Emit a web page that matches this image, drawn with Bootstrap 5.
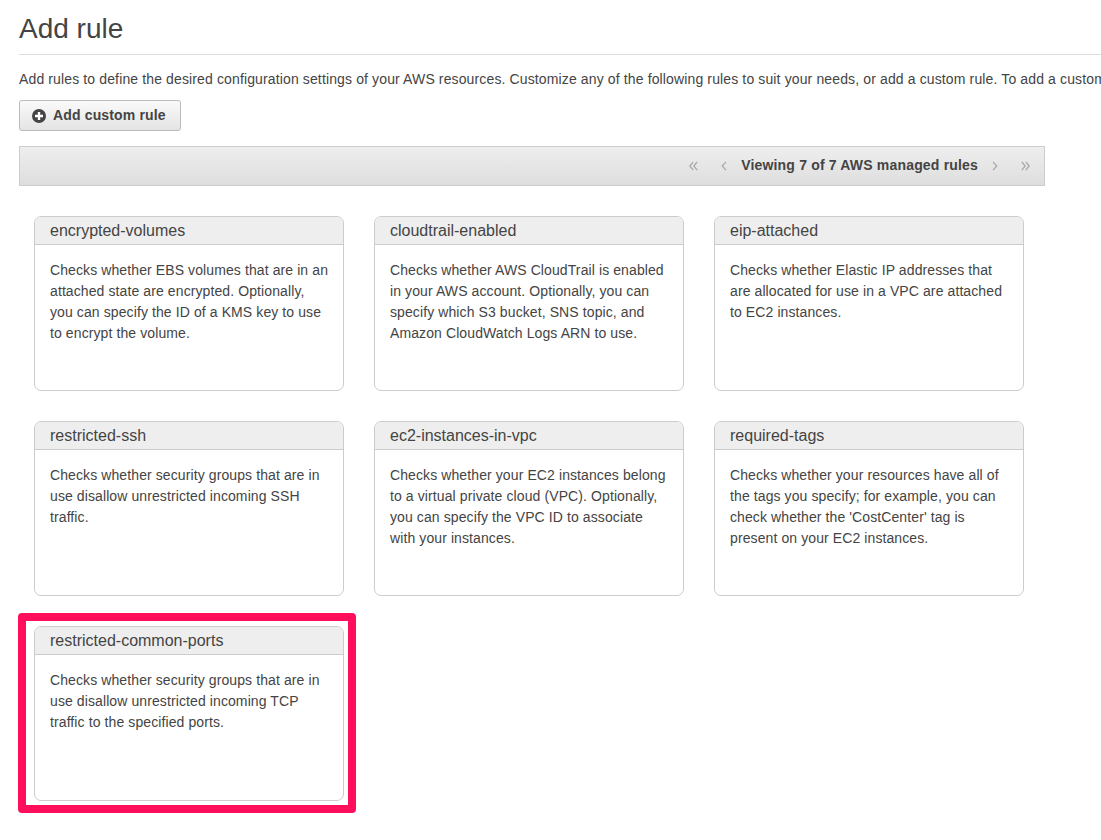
<!DOCTYPE html>
<html lang="en">
<head>
<meta charset="utf-8">
<title>Add rule</title>
<link href="https://cdn.jsdelivr.net/npm/bootstrap@5.3.0/dist/css/bootstrap.min.css" rel="stylesheet">
<style>
html,body{overflow:hidden;height:840px;}
body{font-family:"Liberation Sans",Arial,sans-serif;color:#444;font-size:14px;background:#fff;}
.page-wrap{padding:0 0 0 19px;width:1101px;}
.page-title{font-size:28px;line-height:32px;font-weight:400;margin:0;padding:13px 0 9px;border-bottom:1px solid #ddd;color:#444;height:55px;}
.intro-text{white-space:nowrap;margin:15px 0 0;line-height:18px;height:18px;font-size:14px;color:#444;letter-spacing:.13px;overflow:hidden;width:1082px;}
.add-btn{margin-top:12px;width:162px;height:31px;padding:0 0 0 12px;font-size:14px;font-weight:700;letter-spacing:.15px;color:#444;border:1px solid #bbb;border-radius:3px;background:linear-gradient(#fafafa,#e4e4e4);display:flex;align-items:center;justify-content:flex-start;gap:7px;}
.add-btn:hover{color:#444;border-color:#bbb;}
.pager-bar{margin-top:15px;width:1026px;height:40px;border:1px solid #ccc;background:linear-gradient(#eeeeee,#dedede);padding:0 14px 1px 0;}
.pager-label{font-weight:700;color:#444;letter-spacing:.18px;margin:0 14px;}
.pager-icon{display:block;}
.pager-gap{margin-left:23px;}
.rule-grid{display:grid;grid-template-columns:repeat(3,310px);gap:30px;margin:30px 0 0 15px;}
.rule-card{height:175px;border:1px solid #ccc;border-radius:7px;background:#fff;position:relative;}
.rule-head{height:28px;line-height:27px;font-size:16px;padding:0 15px;background:#eeeeee;border-bottom:1px solid #ccc;border-radius:6px 6px 0 0;color:#444;}
.rule-text{padding:15px 13px 0 15px;line-height:21px;font-size:14px;color:#444;letter-spacing:.1px;}
.rule-mark{position:absolute;left:-17px;right:-13px;top:-14px;bottom:-13px;border:8px solid #ff0f5b;border-radius:4px;pointer-events:none;}
</style>
</head>
<body>
<div class="page-wrap">
  <h1 class="page-title">Add rule</h1>
  <p class="intro-text">Add rules to define the desired configuration settings of your AWS resources. Customize any of the following rules to suit your needs, or add a custom rule. To add a custom rule, you must first create a function in AWS Lambda.</p>
  <button type="button" class="btn add-btn">
    <svg width="14" height="14" viewBox="0 0 14 14" aria-hidden="true"><circle cx="7" cy="7" r="7" fill="#444"/><path d="M3 7h8M7 3v8" stroke="#fff" stroke-width="2.4"/></svg>
    <span>Add custom rule</span>
  </button>
  <div class="pager-bar d-flex align-items-center justify-content-end">
    <svg class="pager-icon" width="9" height="10" viewBox="0 0 9 10" aria-hidden="true"><path d="M4.2.8.8 5l3.4 4.2M8.2.8 4.8 5l3.4 4.2" fill="none" stroke="#a6a6a6" stroke-width="1.2"/></svg>
    <svg class="pager-icon pager-gap" width="6" height="10" viewBox="0 0 6 10" aria-hidden="true"><path d="M5 .8 1.2 5 5 9.2" fill="none" stroke="#a6a6a6" stroke-width="1.2"/></svg>
    <span class="pager-label">Viewing 7 of 7 AWS managed rules</span>
    <svg class="pager-icon" width="6" height="10" viewBox="0 0 6 10" aria-hidden="true"><path d="M1 .8 4.8 5 1 9.2" fill="none" stroke="#a6a6a6" stroke-width="1.2"/></svg>
    <svg class="pager-icon pager-gap" width="9" height="10" viewBox="0 0 9 10" aria-hidden="true"><path d="M.8.8 4.2 5 .8 9.2M4.8.8 8.2 5 4.8 9.2" fill="none" stroke="#a6a6a6" stroke-width="1.2"/></svg>
  </div>
  <div class="rule-grid">
    <div class="rule-card"><div class="rule-head">encrypted-volumes</div><div class="rule-text">Checks whether EBS volumes that are in an attached state are encrypted. Optionally, you can specify the ID of a KMS key to use to encrypt the volume.</div></div>
    <div class="rule-card"><div class="rule-head">cloudtrail-enabled</div><div class="rule-text">Checks whether AWS CloudTrail is enabled in your AWS account. Optionally, you can specify which S3 bucket, SNS topic, and Amazon CloudWatch Logs ARN to use.</div></div>
    <div class="rule-card"><div class="rule-head">eip-attached</div><div class="rule-text">Checks whether Elastic IP addresses that are allocated for use in a VPC are attached to EC2 instances.</div></div>
    <div class="rule-card"><div class="rule-head">restricted-ssh</div><div class="rule-text">Checks whether security groups that are in use disallow unrestricted incoming SSH traffic.</div></div>
    <div class="rule-card"><div class="rule-head">ec2-instances-in-vpc</div><div class="rule-text">Checks whether your EC2 instances belong to a virtual private cloud (VPC). Optionally, you can specify the VPC ID to associate with your instances.</div></div>
    <div class="rule-card"><div class="rule-head">required-tags</div><div class="rule-text">Checks whether your resources have all of the tags you specify; for example, you can check whether the 'CostCenter' tag is present on your EC2 instances.</div></div>
    <div class="rule-card"><div class="rule-head">restricted-common-ports</div><div class="rule-text">Checks whether security groups that are in use disallow unrestricted incoming TCP traffic to the specified ports.</div><div class="rule-mark"></div></div>
  </div>
</div>
<script src="https://cdn.jsdelivr.net/npm/bootstrap@5.3.0/dist/js/bootstrap.bundle.min.js"></script>
</body>
</html>
